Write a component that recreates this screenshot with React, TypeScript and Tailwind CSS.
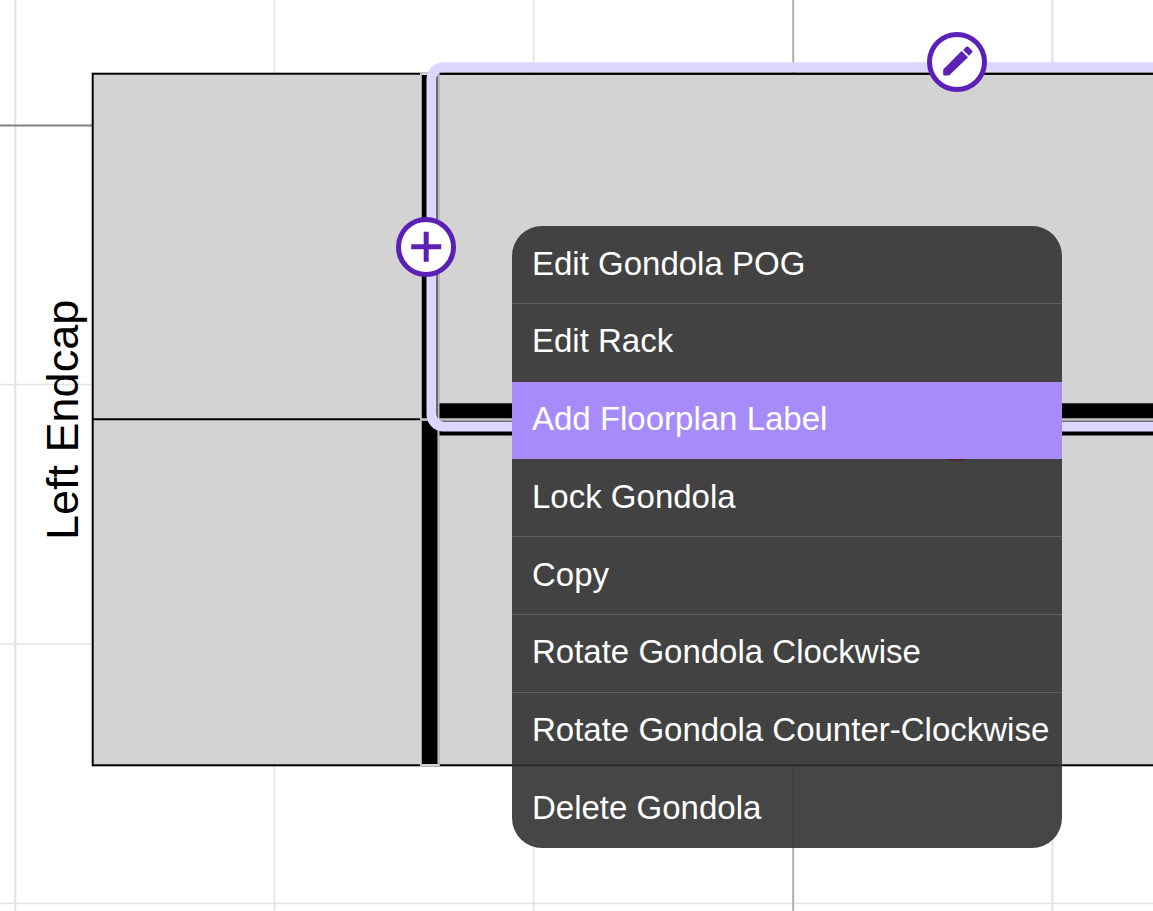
import React from "react";

type MenuItem = { label: string; active?: boolean; divider?: boolean };

const menuItems: MenuItem[] = [
  { label: "Edit Gondola POG", divider: true },
  { label: "Edit Rack" },
  { label: "Add Floorplan Label", active: true },
  { label: "Lock Gondola", divider: true },
  { label: "Copy", divider: true },
  { label: "Rotate Gondola Clockwise", divider: true },
  { label: "Rotate Gondola Counter-Clockwise" },
  { label: "Delete Gondola" },
];

function itemStyle(item: MenuItem) {
  if (item.active) return "border-transparent bg-[#a78bfa]";
  return item.divider ? "border-white/15" : "border-transparent";
}

function FloorplanCanvas() {
  return (
    <svg className="absolute inset-0 h-full w-full" aria-hidden="true">
      {/* grid */}
      <g stroke="#e2e2e2" strokeWidth="1.5">
        <line x1="15.3" y1="0" x2="15.3" y2="100%" strokeWidth="2" />
        <line x1="274.5" y1="0" x2="274.5" y2="100%" />
        <line x1="533.7" y1="0" x2="533.7" y2="100%" />
        <line x1="1052.5" y1="0" x2="1052.5" y2="100%" strokeWidth="2" />
        <line x1="0" y1="384.5" x2="100%" y2="384.5" />
        <line x1="0" y1="644" x2="100%" y2="644" />
        <line x1="0" y1="903.5" x2="100%" y2="903.5" />
      </g>
      <line x1="793.2" y1="0" x2="793.2" y2="100%" stroke="#b0b0b0" strokeWidth="2" />
      <line x1="0" y1="125.5" x2="100%" y2="125.5" stroke="#808080" strokeWidth="2" />

      {/* fixture bodies */}
      <rect x="92.7" y="73.7" width="4000" height="691.6" fill="#d3d3d3" stroke="#000" strokeWidth="2" />
      <line x1="92" y1="419.3" x2="420" y2="419.3" stroke="#000" strokeWidth="2" />

      {/* uprights */}
      <rect x="420" y="72.5" width="20" height="693.5" fill="#d3d3d3" />
      <line x1="439" y1="73" x2="439" y2="766" stroke="#a3a3a3" strokeWidth="1" />
      <line x1="421.5" y1="73" x2="421.5" y2="765" stroke="#a3a3a3" strokeWidth="1" />
      <rect x="422" y="75" width="15.5" height="689" fill="#000" />

      {/* back panels */}
      <rect x="439.5" y="403.3" width="4000" height="32.2" fill="#000" />
      <rect x="420" y="418.3" width="4000" height="2.7" fill="#d3d3d3" />
      <line x1="420" y1="420.3" x2="100%" y2="420.3" stroke="#888" strokeWidth="0.8" />

      {/* selection outline */}
      <rect x="431.5" y="67.3" width="4000" height="359.3" rx="12" fill="none" stroke="#ddd6fe" strokeWidth="10" />
      <line x1="439.5" y1="73.7" x2="100%" y2="73.7" stroke="#000" strokeWidth="2" />

      {/* delete handle */}
      <circle cx="957" cy="431.5" r="27.5" fill="#fff" stroke="#f00" strokeWidth="5" />

      <text
        transform="translate(78 540) rotate(-90)"
        fontFamily="Liberation Sans, Arial, sans-serif"
        fontSize="45"
        fill="#000"
      >
        Left Endcap
      </text>
    </svg>
  );
}

export default function App() {
  return (
    <main className="relative h-screen w-full overflow-hidden bg-white font-['Liberation_Sans',Arial,sans-serif]">
      <FloorplanCanvas />

      <button
        type="button"
        aria-label="Add gondola"
        className="absolute top-[217px] left-[396px] size-15 rounded-full border-5 border-[#5b21b6] bg-white text-[#5b21b6]"
      >
        <svg viewBox="0 0 50 50" className="size-full" fill="none" stroke="currentColor" strokeWidth="5">
          <path d="M25.2 9.8v30M10.2 24.8h30" />
        </svg>
      </button>

      <button
        type="button"
        aria-label="Edit gondola"
        className="absolute top-[32px] left-[927px] size-15 rounded-full border-5 border-[#5b21b6] bg-white text-[#5b21b6]"
      >
        <svg viewBox="0 0 50 50" className="size-full" fill="currentColor">
          <path d="M11.2 32.6 29.6 14 36 20.2 17.6 38 15.8 38.6H12Q11.2 38.6 11.2 37.8Z" />
          <path d="M31 13 34 10.1Q35.2 9 36.4 10.1L40 13.5Q41 14.6 40 15.6L37.1 18.8Z" />
        </svg>
      </button>

      <div
        role="menu"
        aria-label="Gondola actions"
        className="absolute top-[226px] left-[512px] grid h-[622px] w-[550px] grid-rows-8 overflow-hidden rounded-[30px] bg-[#323232]/90"
      >
        {menuItems.map((item) => (
          <button
            key={item.label}
            type="button"
            role="menuitem"
            className={`border-b px-5 pb-0.5 text-left text-[33px] whitespace-nowrap text-white ${itemStyle(item)}`}
          >
            {item.label}
          </button>
        ))}
      </div>
    </main>
  );
}
